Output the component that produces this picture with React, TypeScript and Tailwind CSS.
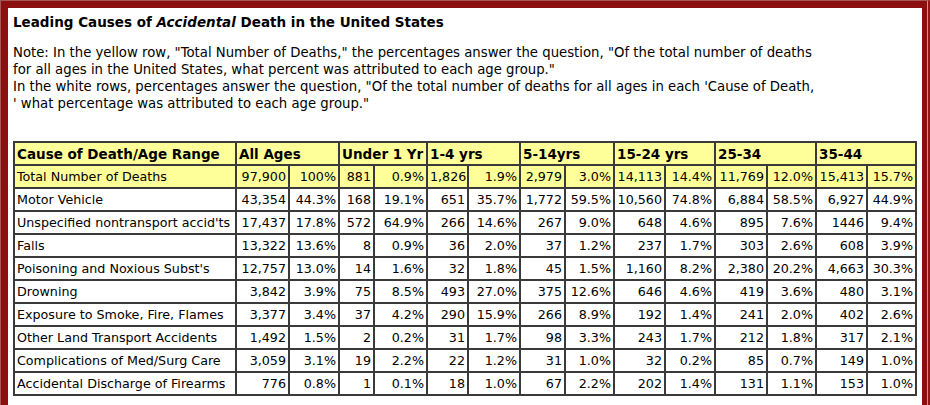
import React from "react";

type Row = { name: string; vals: string[] };

const rows: Row[] = [
  { name: "Motor Vehicle", vals: ["43,354", "44.3%", "168", "19.1%", "651", "35.7%", "1,772", "59.5%", "10,560", "74.8%", "6,884", "58.5%", "6,927", "44.9%"] },
  { name: "Unspecified nontransport accid'ts", vals: ["17,437", "17.8%", "572", "64.9%", "266", "14.6%", "267", "9.0%", "648", "4.6%", "895", "7.6%", "1446", "9.4%"] },
  { name: "Falls", vals: ["13,322", "13.6%", "8", "0.9%", "36", "2.0%", "37", "1.2%", "237", "1.7%", "303", "2.6%", "608", "3.9%"] },
  { name: "Poisoning and Noxious Subst's", vals: ["12,757", "13.0%", "14", "1.6%", "32", "1.8%", "45", "1.5%", "1,160", "8.2%", "2,380", "20.2%", "4,663", "30.3%"] },
  { name: "Drowning", vals: ["3,842", "3.9%", "75", "8.5%", "493", "27.0%", "375", "12.6%", "646", "4.6%", "419", "3.6%", "480", "3.1%"] },
  { name: "Exposure to Smoke, Fire, Flames", vals: ["3,377", "3.4%", "37", "4.2%", "290", "15.9%", "266", "8.9%", "192", "1.4%", "241", "2.0%", "402", "2.6%"] },
  { name: "Other Land Transport Accidents", vals: ["1,492", "1.5%", "2", "0.2%", "31", "1.7%", "98", "3.3%", "243", "1.7%", "212", "1.8%", "317", "2.1%"] },
  { name: "Complications of Med/Surg Care", vals: ["3,059", "3.1%", "19", "2.2%", "22", "1.2%", "31", "1.0%", "32", "0.2%", "85", "0.7%", "149", "1.0%"] },
  { name: "Accidental Discharge of Firearms", vals: ["776", "0.8%", "1", "0.1%", "18", "1.0%", "67", "2.2%", "202", "1.4%", "131", "1.1%", "153", "1.0%"] },
];

const total: string[] = ["97,900", "100%", "881", "0.9%", "1,826", "1.9%", "2,979", "3.0%", "14,113", "14.4%", "11,769", "12.0%", "15,413", "15.7%"];

const headers = ["All Ages", "Under 1 Yr", "1-4 yrs", "5-14yrs", "15-24 yrs", "25-34", "35-44"];

const cell = "border border-[#3a3a3a] h-[23px] px-[2px] whitespace-nowrap overflow-hidden align-middle";

export default function App() {
  return (
    <div className="w-[930px] h-[405px] overflow-hidden bg-white text-black font-['DejaVu_Sans',Verdana,sans-serif]">
      <div className="h-[430px] border-t border-l border-r-2 border-t-[#a45858] border-l-[#a45858] border-r-[#921414]">
        <div className="h-full border-r border-r-[#dc8c8c]">
          <div className="h-full border-t-[7px] border-l-[7px] border-r-[5px] border-[#8b0f0f] bg-white pl-[5px] pt-[6px]">
            <h1 className="text-[13.5px] leading-[17px] font-bold">
              Leading Causes of <i>Accidental</i> Death in the United States
            </h1>
            <p className="mt-[13px] text-[13.25px] leading-[17px]">
              Note: In the yellow row, "Total Number of Deaths," the percentages answer the question, "Of the total number of deaths
              <br />
              for all ages in the United States, what percent was attributed to each age group."
              <br />
              In the white rows, percentages answer the question, "Of the total number of deaths for all ages in each 'Cause of Death,
              <br />
              ' what percentage was attributed to each age group."
            </p>
            <table className="mt-[29px] table-fixed border-separate border-spacing-0 border border-[#3a3a3a] w-[904px] text-[12.7px] leading-[16px]">
              <colgroup>
                <col className="w-[222px]" />
                <col className="w-[53px]" />
                <col className="w-[50px]" />
                <col className="w-[35px]" />
                <col className="w-[53px]" />
                <col className="w-[41px]" />
                <col className="w-[52px]" />
                <col className="w-[45px]" />
                <col className="w-[49px]" />
                <col className="w-[51px]" />
                <col className="w-[50px]" />
                <col className="w-[52px]" />
                <col className="w-[49px]" />
                <col className="w-[51px]" />
                <col className="w-[49px]" />
              </colgroup>
              <tbody>
                <tr className="bg-[#ffff99] font-bold text-[13.5px]">
                  <td className={cell + " text-left"}>Cause of Death/Age Range</td>
                  {headers.map((h) => (
                    <td key={h} colSpan={2} className={cell + " text-left"}>
                      {h}
                    </td>
                  ))}
                </tr>
                <tr className="bg-[#ffff99]">
                  <td className={cell + " text-left"}>Total Number of Deaths</td>
                  {total.map((v, i) => (
                    <td key={i} className={cell + " text-right"}>
                      {v}
                    </td>
                  ))}
                </tr>
                {rows.map((r) => (
                  <tr key={r.name} className="bg-white">
                    <td className={cell + " text-left"}>{r.name}</td>
                    {r.vals.map((v, i) => (
                      <td key={i} className={cell + " text-right"}>
                        {v}
                      </td>
                    ))}
                  </tr>
                ))}
              </tbody>
            </table>
          </div>
        </div>
      </div>
    </div>
  );
}
